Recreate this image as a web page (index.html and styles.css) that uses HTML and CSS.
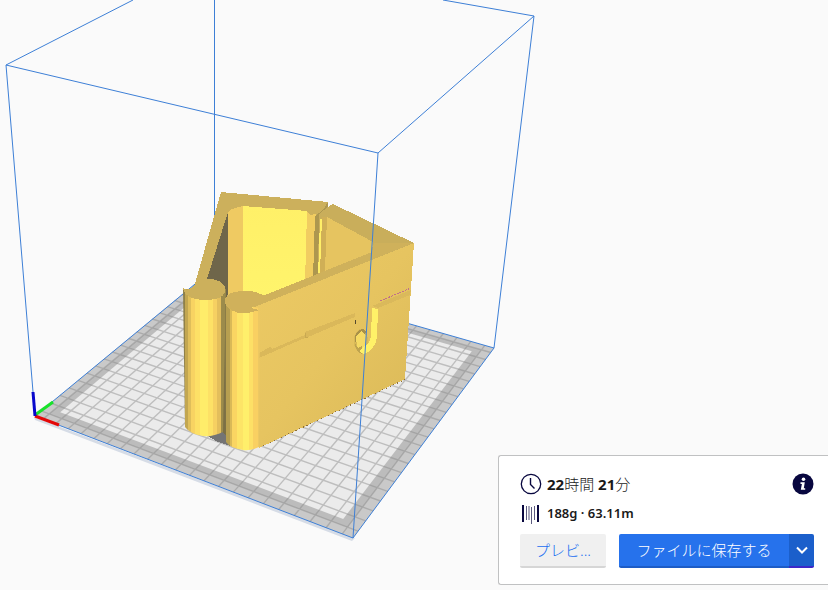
FILE: index.html
```html
<!DOCTYPE html>
<html lang="ja">
<head>
    <meta charset="utf-8">
    <title>22時間 21分</title>
    <link rel="stylesheet" href="styles.css">
</head>
<body>
    <main class="stage">
        <svg class="viewport" viewBox="0 0 828 590" preserveAspectRatio="xMinYMin slice" aria-hidden="true">
            <defs>
                <linearGradient id="wall" x1="0" y1="0" x2="1" y2="1">
                    <stop offset="0" stop-color="#edca64"/>
                    <stop offset="0.5" stop-color="#e6c460"/>
                    <stop offset="1" stop-color="#d9b858"/>
                </linearGradient>
                <linearGradient id="inside" x1="0" y1="0" x2="0" y2="1">
                    <stop offset="0" stop-color="#fff068"/>
                    <stop offset="1" stop-color="#fff46c"/>
                </linearGradient>
                <clipPath id="tubeLeft">
                    <path d="M183 289 L226 289 L223 432 Q213 437 203 436 Q190 434 185 427 Z"/>
                </clipPath>
                <clipPath id="tubeRight">
                    <path d="M225 302 L260 308 L259 447 Q250 451 243 450 Q230 448 226 442 Z"/>
                </clipPath>
            </defs>

            <!-- build plate -->
            <polygon points="34,417 35,420 352,541 355,538" fill="#d6dce6"/>
            <g id="bed"></g>

            <!-- back edges of the volume -->
            <g class="edges">
                <path d="M214.5 0V268L35 416"/>
                <path d="M214 268L494 348"/>
                <path d="M133 0L6 65L35 416"/>
                <path d="M443 0L534 16L494 348"/>
            </g>

            <!-- model -->
            <g class="model">
                <polygon points="205,434 223,428 230,434 230,446 216,441" fill="#747474"/>
                <polygon points="221,192 328,202 323,211 316,226 240,300 215,300 190,300 196,280" fill="#ccb05c"/>
                <polygon points="228,212 228,300 213,300 207,279" fill="#6f664a"/>
                <polygon points="228,212 232,209 243,206 243,300 228,300" fill="#efca62"/>
                <polygon points="243,206 307,211 306,282 265,298 243,298" fill="url(#inside)"/>
                <polygon points="307,211 310,215 316,214 314,280 305,283" fill="#f1cd61"/>
                <polygon points="328,202 328,207 319,215 318,278 313,279 315,216 323,210" fill="#ad974f"/>
                <polygon points="333,204 414,243 372,264 325,275 318,276 319,214 328,207" fill="#c9ae5b"/>
                <polygon points="320,219 322,219 320,276 318,277" fill="#ffef68"/>
                <polygon points="322,217 327,217 325,272 320,274" fill="#d0af56"/>
                <polygon points="327,217 373,242 372,252 325,271" fill="#e6c460"/>
                <polygon points="413,243 252,309 244,308 240,304 265,295 372,252 374,243" fill="#cfb15b"/>
                <polygon points="414,243 411,289 405,379 363,399 259,448 252,308" fill="url(#wall)"/>
                <!-- seam -->
                <polygon points="259,353 270,347 272,349 305,335 305,332 355,313 355,317 308,337 300,340 259,358" fill="#dab85a"/>
                <polygon points="372,306 411,290 410,295 378,308" fill="#dab95b"/>
                <path d="M305 333V337L308 338" stroke="#c9a951" fill="none"/>
                <path d="M380 301L411 288" stroke="#c0708a" stroke-dasharray="2 1" fill="none"/>
                <path d="M355.5 320V324" stroke="#54492d" fill="none"/>
                <path d="M263 446L405 379.500" stroke="#8d6e39" stroke-dasharray="1 3" fill="none"/>
                <!-- hook -->
                <ellipse cx="361" cy="341" rx="7" ry="12" fill="#d8b957"/>
                <path d="M355 336Q358 329 363 329L366 332L362 336L355 342Z" fill="#a99149"/>
                <path d="M356 336L362 331L366 336V348L357 348Z" fill="#f5da64"/>
                <path d="M355 343L358 348L362 346V354Q357 353 355 345Z" fill="#bfa44f"/>
                <path d="M359 351L364 346Q369 345 371 337L372 308L378 309L377 338Q374 351 364 354Z" fill="#fff168"/>
                <!-- hinge tubes -->
                <polygon points="222,293 227,298 227,436 222,432" fill="#7c7045"/>
                <g id="tubeA" clip-path="url(#tubeLeft)"></g>
                <path d="M183 288L187 290Q196 286 199 280Q219 276 225 287Q227 294 219 298Q206 302 192 298Q184 295 183 288Z" fill="#ccb05c"/>
                <g id="tubeB" clip-path="url(#tubeRight)"></g>
                <path d="M225 301Q225 294 235 292Q249 289 258 293L268 297L251 308L259 310Q249 314 239 313Q225 309 225 301Z" fill="#d0b15b"/>
            </g>

            <!-- front edges of the volume -->
            <g class="edges">
                <path d="M6 65L378 153L534 16"/>
                <path d="M378 153L353 538"/>
                <path d="M35 416L353 538L494 348"/>
            </g>

            <g class="axes">
                <path d="M35 415L53 402" stroke="#18e22a"/>
                <path d="M35 416L59 425" stroke="#e30808"/>
                <path d="M35 416L33 392" stroke="#0808cc"/>
            </g>
        </svg>

        <section class="panel">
            <div class="row">
                <svg class="icon" viewBox="0 0 22 22" aria-hidden="true">
                    <circle cx="11" cy="11" r="9.700" fill="none" stroke="#08073f" stroke-width="1.300"/>
                    <path d="M10.500 5V11.500L14.500 15.500" fill="none" stroke="#08073f" stroke-width="1.400"/>
                </svg>
                <p class="time"><b>22</b>時間 <b>21</b>分</p>
                <button class="info" type="button" aria-label="情報">
                    <svg viewBox="0 0 22 22" aria-hidden="true">
                        <circle cx="11" cy="11" r="10.500" fill="#08073f"/>
                        <circle cx="11.500" cy="6.300" r="1.800" fill="#fff"/>
                        <path d="M8.500 9.300H12.800L11.800 15.200H13.200V16.800H8.800L9.900 10.900H8.500Z" fill="#fff"/>
                    </svg>
                </button>
            </div>
            <div class="row">
                <svg class="icon" viewBox="0 0 22 22" aria-hidden="true">
                    <path d="M3 2V19M18 2V19" stroke="#08073f" stroke-width="2"/>
                    <path d="M6.500 3V17M9 3V17M11.500 4V21M14.500 3V17" stroke="#5c5b80" stroke-width="1"/>
                </svg>
                <p class="material">188g · 63.11m</p>
            </div>
            <div class="actions">
                <button class="btn preview" type="button">プレビ...</button>
                <div class="split">
                    <button class="btn save" type="button">ファイルに保存する</button>
                    <button class="btn more" type="button" aria-label="その他">
                        <svg viewBox="0 0 12 8" aria-hidden="true">
                            <path d="M1 1.500L6 6.500L11 1.500" fill="none" stroke="#fff" stroke-width="2"/>
                        </svg>
                    </button>
                </div>
            </div>
        </section>
    </main>
    <script src="bed.js"></script>
</body>
</html>
```

FILE: styles.css
```css
* {
    box-sizing: border-box;
}

body {
    margin: 0;
    background: #fafafa;
    color: #191919;
    font-family: "Noto Sans", "Noto Sans CJK JP", sans-serif;
}

.stage {
    position: relative;
    display: flex;
    align-items: flex-end;
    justify-content: flex-end;
    min-height: 100vh;
    padding-bottom: 5px;
    overflow: hidden;
}

/* 3D view behind the panel */
.viewport {
    position: absolute;
    inset: 0;
    width: 100%;
    height: 100%;
}

.edges path {
    fill: none;
    stroke: #3d7fd6;
    stroke-width: 1;
}

.axes path {
    fill: none;
    stroke-width: 3;
}

.model {
    shape-rendering: crispEdges;
}

/* print info panel */
.panel {
    position: relative;
    display: flex;
    flex-direction: column;
    gap: 8px;
    width: 330px;
    padding: 17px 14px 16px 21px;
    background: #fff;
    border: 1px solid #c0c1c2;
    border-right: 0;
    border-radius: 3px 0 0 3px;
}

.row {
    display: flex;
    align-items: center;
    gap: 5px;
    height: 22px;
}

.icon {
    width: 22px;
    height: 22px;
}

.row p {
    margin: 0;
    padding-bottom: 2px;
}

.time {
    font-size: 15px;
    font-weight: 300;
}

.time b {
    font-weight: 700;
}

.material {
    font-size: 13px;
    font-weight: 600;
}

.info {
    width: 22px;
    height: 22px;
    margin-left: auto;
    padding: 0;
    border: 0;
    background: none;
    cursor: pointer;
}

.info svg {
    display: block;
}

.actions {
    display: flex;
    gap: 13px;
    margin-top: 1px;
}

.btn {
    height: 34px;
    padding: 0;
    border: 0;
    border-bottom: 2px solid;
    font-family: inherit;
    font-size: 15px;
    font-weight: 300;
    line-height: 30px;
    cursor: pointer;
}

.preview {
    width: 86px;
    border-radius: 2px;
    border-color: #d6d6d6;
    background: #f0f0f0;
    color: #196ef0;
}

.split {
    display: flex;
    flex: 1;
}

.save {
    flex: 1;
    border-color: #1d5cc6;
    border-radius: 2px 0 0 2px;
    background: #2672ec;
    color: #fff;
}

.more {
    display: flex;
    align-items: center;
    justify-content: center;
    width: 25px;
    border-color: #3c28c8;
    border-radius: 0 2px 2px 0;
    background: #1b5fcb;
}

.more svg {
    width: 12px;
    height: 8px;
}
```

FILE: bed.js
```js
// corners of the plate on screen: origin, x end, far corner, y end
const A = [35, 416], B = [353, 538], C = [494, 348], D = [214, 268];
const CELLS = 22.3;
const FIRST = 0.65; // the grid is centred, so the outer cells are cut
const MARGIN = 1.15;

// projective map from plate units (0..1) to the screen
const sx = A[0] - B[0] + C[0] - D[0], sy = A[1] - B[1] + C[1] - D[1];
const dx1 = B[0] - C[0], dx2 = D[0] - C[0];
const dy1 = B[1] - C[1], dy2 = D[1] - C[1];
const det = dx1 * dy2 - dx2 * dy1;
const g = (sx * dy2 - dx2 * sy) / det;
const h = (dx1 * sy - sx * dy1) / det;

function project(u, v) {
    const w = g * u + h * v + 1;
    const x = (B[0] - A[0] + g * B[0]) * u + (D[0] - A[0] + h * D[0]) * v + A[0];
    const y = (B[1] - A[1] + g * B[1]) * u + (D[1] - A[1] + h * D[1]) * v + A[1];
    return (x / w).toFixed(1) + ',' + (y / w).toFixed(1);
}

function square(m, fill) {
    const a = m / CELLS, b = 1 - a;
    const pts = [project(a, a), project(b, a), project(b, b), project(a, b)].join(' ');
    return `<polygon points="${pts}" fill="${fill}"/>`;
}

let lines = '';
for (let i = FIRST; i < CELLS; i++) {
    const t = i / CELLS;
    lines += `M${project(t, 0)}L${project(t, 1)}M${project(0, t)}L${project(1, t)}`;
}

document.getElementById('bed').innerHTML =
    square(0, '#c9c9c9') +
    square(FIRST, '#bcbcbc') +
    square(MARGIN, '#ebebeb') +
    `<path d="${lines}" fill="none" stroke="#888" stroke-opacity="0.45" stroke-width="1.4"/>`;

// facets of the two tubes: [left edge, colour]
function facets(id, list, top, bottom) {
    let out = '';
    list.forEach(([x, color], i) => {
        const next = list[i + 1] ? list[i + 1][0] : x + 6;
        out += `<rect x="${x}" y="${top}" width="${next - x}" height="${bottom - top}" fill="${color}"/>`;
    });
    document.getElementById(id).innerHTML = out;
}

facets('tubeA', [
    [183, '#8f8048'], [185, '#c2a650'], [188, '#dfbe5a'], [191, '#f8d362'],
    [195, '#fde066'], [200, '#ffed6a'], [208, '#fde166'], [213, '#f6d062'],
    [217, '#e3be5c'], [221, '#9c8b4b']
], 285, 440);

facets('tubeB', [
    [224, '#8c7d47'], [226, '#b79f50'], [230, '#d9b957'], [232, '#fad562'],
    [237, '#fde467'], [243, '#ffef6b'], [249, '#fde066'], [253, '#f9d062'],
    [258, '#edc862']
], 298, 455);
```
